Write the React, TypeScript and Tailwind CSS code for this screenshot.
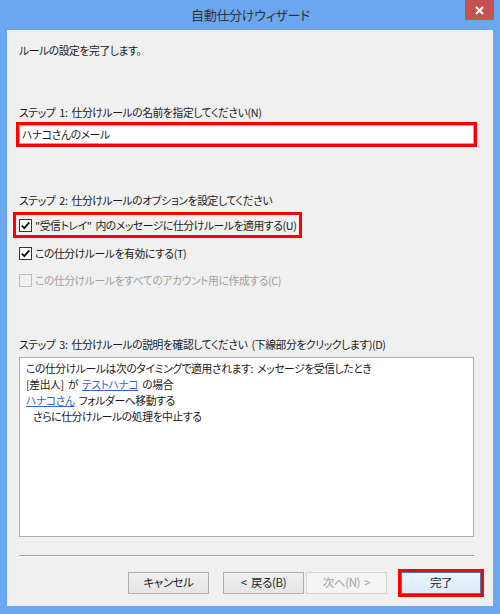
import React from "react";

function Check({ checked, disabled }: { checked?: boolean; disabled?: boolean }) {
  return (
    <span
      className={`flex h-[13px] w-[13px] shrink-0 items-center justify-center border ${
        disabled ? "border-[#bcbcbc] bg-[#f0f0f0]" : "border-[#333333] bg-white"
      }`}
    >
      {checked && (
        <svg width="11" height="11" viewBox="0 0 11 11">
          <path d="M1.8 5.6 L4.3 8.2 L9.3 2.4" fill="none" stroke="#111" strokeWidth="1.8" />
        </svg>
      )}
    </span>
  );
}

function Btn({ label, disabled }: { label: string; disabled?: boolean }) {
  return (
    <button
      className={`flex h-[22px] w-[81px] items-center justify-center border text-[11.5px] leading-none [word-spacing:2px] ${
        disabled
          ? "border-[#d5d5d5] bg-[#f4f4f4] text-[#a0a0a0]"
          : "border-[#acacac] bg-gradient-to-b from-[#f0f0f0] to-[#e5e5e5] text-[#1e1e1e]"
      }`}
    >
      {label}
    </button>
  );
}

export default function App() {
  const link = "text-[#3366cc] underline decoration-[#3366cc]";
  return (
    <div className="flex h-[614px] w-[500px] flex-col bg-[#6ba7f1] px-[7px] pb-[8px] font-['Noto_Sans_CJK_JP',sans-serif] text-[10.8px] tracking-[-0.4px] text-[#1a1a1a] [font-feature-settings:'palt'] [word-spacing:2px]">
      {/* title bar */}
      <div className="relative flex h-[30px] shrink-0 items-center justify-center">
        <span className="-mt-[1px] pl-[1px] text-[13px] leading-none tracking-[-0.3px] text-[#333]">自動仕分けウィザード</span>
        <button className="absolute -right-[1px] top-0 flex h-[20px] w-[29px] items-center justify-center bg-[#c75050]">
          <svg width="9" height="9" viewBox="0 0 9 9">
            <path d="M1 1 L8 8 M8 1 L1 8" stroke="#fff" strokeWidth="2" />
          </svg>
        </button>
      </div>

      {/* client area */}
      <div className="flex flex-1 flex-col border-l border-b border-[#e4ecf6] bg-[#f0f0f0] pl-[11px] pr-[19px]">
        <p className="mt-[12px] h-4 leading-4">ルールの設定を完了します。</p>

        <p className="mt-[46px] h-4 leading-4">ステップ 1: 仕分けルールの名前を指定してください(N)</p>
        <div className="-mx-[3px] mt-[2px] border-[3px] border-[#ff0000]">
          <div className="flex h-[19px] items-center border border-[#abadb3] bg-white pl-[2px] leading-none">
            ハナコさんのメール
          </div>
        </div>

        <p className="mt-[45px] h-4 leading-4">ステップ 2: 仕分けルールのオプションを設定してください</p>
        <div className="-ml-[6px] mt-[4px] flex h-[26px] w-[289px] items-center gap-[3px] border-[3px] border-[#ff0000] pl-[3px]">
          <Check checked />
          <span className="whitespace-nowrap leading-4">"受信トレイ" 内のメッセージに仕分けルールを適用する(U)</span>
        </div>
        <div className="mt-[7px] flex h-4 items-center gap-[3px]">
          <Check checked />
          <span className="leading-4">この仕分けルールを有効にする(T)</span>
        </div>
        <div className="mt-[11px] flex h-4 items-center gap-[3px]">
          <Check disabled />
          <span className="leading-4 text-[#a0a0a0]">この仕分けルールをすべてのアカウント用に作成する(C)</span>
        </div>

        <p className="mt-[48px] h-4 leading-4">ステップ 3: 仕分けルールの説明を確認してください (下線部分をクリックします)(D)</p>
        <div className="mt-[5px] h-[180px] border border-[#abadb3] bg-white px-[6px] pt-[2px] leading-4">
          <p>この仕分けルールは次のタイミングで適用されます: メッセージを受信したとき</p>
          <p>
            [差出人] が <span className={link}>テストハナコ</span> の場合
          </p>
          <p>
            <span className={link}>ハナコさん</span> フォルダーへ移動する
          </p>
          <p className="pl-[7px]">さらに仕分けルールの処理を中止する</p>
        </div>

        <div className="mt-[18px] h-[2px] border-t border-b border-t-[#a0a0a0] border-b-white" />

        <div className="-mr-[7px] mt-[15px] flex items-center justify-end">
          <Btn label="キャンセル" />
          <div className="ml-[14px]">
            <Btn label="< 戻る(B)" />
          </div>
          <div className="ml-[2px]">
            <Btn label="次へ(N) >" disabled />
          </div>
          <div className="-my-[3px] ml-[11px] -mr-[3px] border-[3px] border-[#ff0000]">
            <button className="flex h-[22px] w-[80px] items-center justify-center border border-[#3c7fb1] bg-gradient-to-b from-[#eaf4fd] to-[#dcecfc] text-[11.5px] leading-none text-[#1e1e1e]">
              完了
            </button>
          </div>
        </div>
      </div>
    </div>
  );
}
